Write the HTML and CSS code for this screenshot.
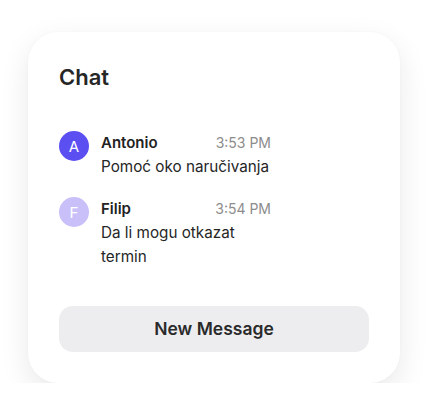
FILE: index.html
```html
<!DOCTYPE html>
<html>
<head>
<meta charset="utf-8">
<link rel="stylesheet" href="styles.css">
</head>
<body>
<div class="card">
  <h1 class="title">Chat</h1>
  <div class="list">
    <div class="item">
      <div class="avatar avatar-a">A</div>
      <div class="body">
        <div class="head"><span class="name">Antonio</span><span class="time">3:53 PM</span></div>
        <div class="msg">Pomoć oko naručivanja</div>
      </div>
    </div>
    <div class="item">
      <div class="avatar avatar-f">F</div>
      <div class="body">
        <div class="head"><span class="name">Filip</span><span class="time">3:54 PM</span></div>
        <div class="msg">Da li mogu otkazat termin</div>
      </div>
    </div>
  </div>
  <button class="btn">New Message</button>
</div>
</body>
</html>
```
FILE: styles.css
```css
* { box-sizing: border-box; }
html, body { margin: 0; padding: 0; background: #fff; }
body {
  font-family: Inter, "Noto Sans", sans-serif;
  color: #222;
  padding: 32px 0 0 28px;
}
.card {
  width: 372px;
  height: 351px;
  background: #fff;
  border-radius: 30px;
  box-shadow: 0 10px 30px rgba(0,0,0,0.09), 0 0 2px rgba(0,0,0,0.04);
  padding: 31px;
  display: flex;
  flex-direction: column;
}
.title {
  margin: 0;
  font-size: 22px;
  line-height: 28px;
  font-weight: 600;
  color: #262626;
}
.list {
  margin-top: 40px;
  display: flex;
  flex-direction: column;
  gap: 18px;
}
.item {
  display: flex;
  gap: 12px;
  width: 212px;
}
.avatar {
  width: 30px;
  height: 30px;
  border-radius: 50%;
  flex: none;
  display: flex;
  align-items: center;
  justify-content: center;
  color: #fff;
  font-size: 15px;
}
.avatar-a { background: #5b4ff2; }
.avatar-f { background: #c9bff9; }
.body { flex: 1; }
.head {
  display: flex;
  justify-content: space-between;
  align-items: center;
  line-height: 24px;
}
.name { font-size: 15px; font-weight: 600; color: #222; }
.time { font-size: 14px; color: #8c8c8c; }
.msg { font-size: 15.25px; line-height: 24px; color: #262626; }
.btn {
  margin-top: auto;
  height: 46px;
  width: 100%;
  border: none;
  border-radius: 14px;
  background: #ededf0;
  font-family: Inter, "Noto Sans", sans-serif;
  font-size: 17.5px;
  font-weight: 600;
  color: #2a2a2a;
  padding: 0 0 1px;
}
```
